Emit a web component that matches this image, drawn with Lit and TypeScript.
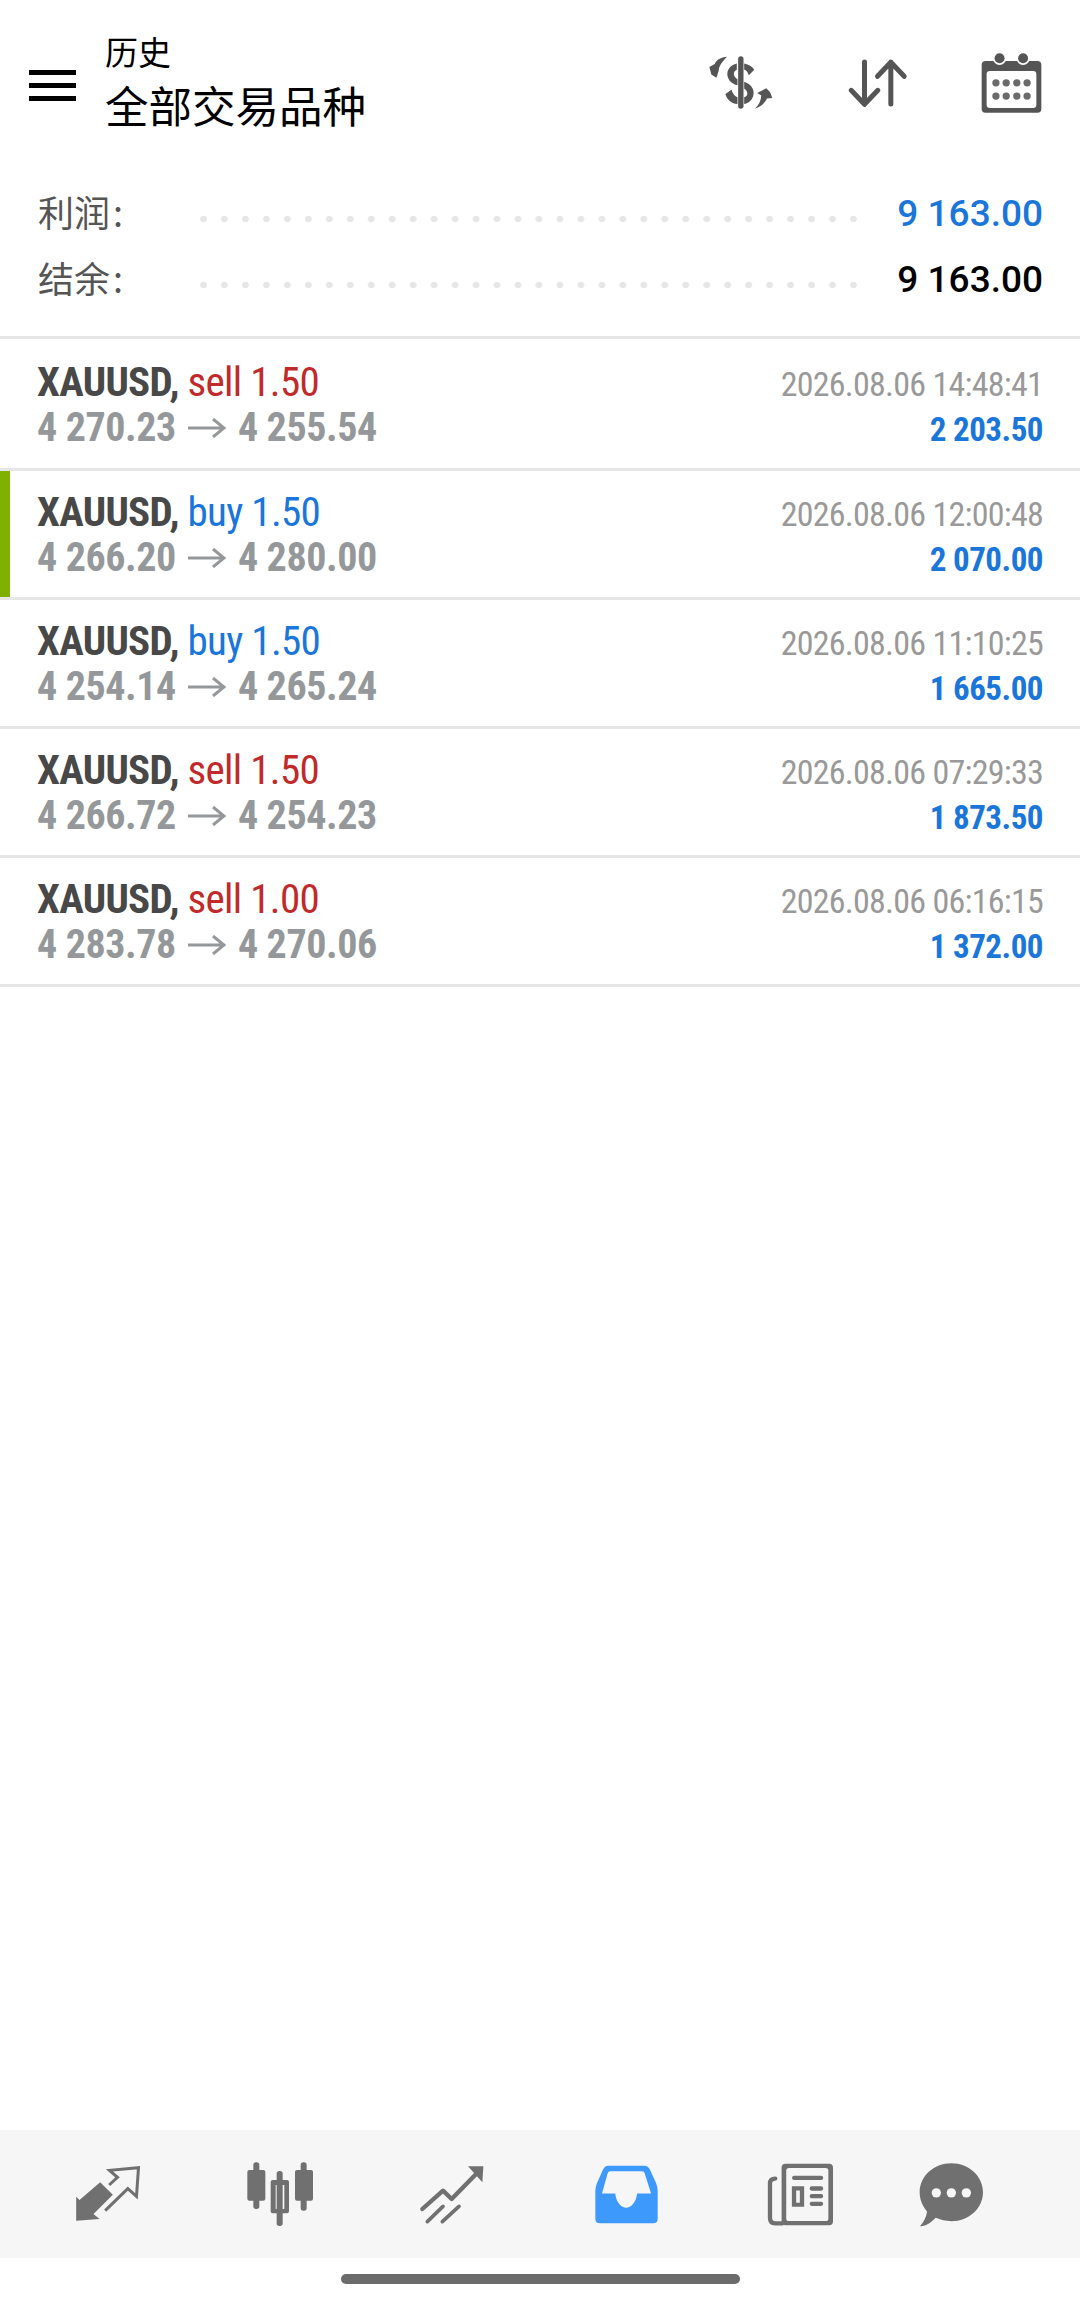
import { LitElement, html, css, svg } from "lit";
import { customElement } from "lit/decorators.js";

interface Deal {
  side: "sell" | "buy";
  lots: string;
  open: string;
  close: string;
  time: string;
  profit: string;
  marked?: boolean;
}

const DEALS: Deal[] = [
  { side: "sell", lots: "1.50", open: "4 270.23", close: "4 255.54", time: "2026.08.06 14:48:41", profit: "2 203.50" },
  { side: "buy", lots: "1.50", open: "4 266.20", close: "4 280.00", time: "2026.08.06 12:00:48", profit: "2 070.00", marked: true },
  { side: "buy", lots: "1.50", open: "4 254.14", close: "4 265.24", time: "2026.08.06 11:10:25", profit: "1 665.00" },
  { side: "sell", lots: "1.50", open: "4 266.72", close: "4 254.23", time: "2026.08.06 07:29:33", profit: "1 873.50" },
  { side: "sell", lots: "1.00", open: "4 283.78", close: "4 270.06", time: "2026.08.06 06:16:15", profit: "1 372.00" },
];

const dollarIcon = svg`
  <g fill="#555">
    <rect x="230" y="112" width="16" height="156" rx="8" />
    <path d="M226 133C202 138 192 160 201 178C206 190 218 196 228 198L228 180C216 174 212 158 226 152Z" />
    <path d="M248 133C262 136 272 142 278 152L262 168C258 158 254 153 248 151Z" />
    <path d="M248 188C266 194 278 208 276 224C274 242 260 252 248 254L248 234C256 232 259 226 257 220C255 214 252 211 248 209Z" />
    <path d="M192 224L210 212C214 224 220 232 228 234L228 254C208 252 196 240 192 224Z" />
    <path d="M197 113C178 115 165 122 160 135L144 144L150 166L165 176L172 155C172 142 182 128 197 113Z" />
    <path d="M280 268C300 262 312 248 316 238L332 236L325 218L314 207L287 221L299 229C298 245 292 258 280 268Z" />
  </g>`;

const sortIcon = svg`
  <g fill="none" stroke="#555" stroke-width="15" stroke-linecap="round" stroke-linejoin="round">
    <path d="M607 127V253M567 212L607 254L647 212" />
    <path d="M686 253V127M646 170L686 128L726 170" />
  </g>`;

const calendarIcon = svg`
  <rect x="960" y="120" width="180" height="156" rx="12" fill="#555" />
  <rect x="975" y="150" width="150" height="112" rx="10" fill="#fff" />
  <circle cx="1014" cy="112" r="20" fill="#fff" />
  <circle cx="1085" cy="112" r="20" fill="#fff" />
  <circle cx="1014" cy="112" r="15" fill="#555" />
  <circle cx="1085" cy="112" r="15" fill="#555" />
  <g fill="#6a6a6a">
    ${[1003, 1034, 1066, 1097].map(
      (x) => svg`<circle cx=${x} cy="186" r="11" /><circle cx=${x} cy="226" r="11" />`
    )}
  </g>`;

const quotesIcon = svg`
  <path fill="#707070" d="M108 300V228L118 238L180 185L218 222L160 280L178 295Z" />
  <path fill="none" stroke="#707070" stroke-width="9" d="M207 193L232 170L208 149L295 141L289 227L263 204L195 270" />`;

const chartIcon = svg`
  <g fill="#707070">
    <rect x="640" y="122" width="18" height="140" rx="8" />
    <rect x="622" y="145" width="54" height="92" rx="6" />
    <rect x="710" y="148" width="18" height="165" rx="8" />
    <path fill-rule="evenodd" d="M698 175H741Q747 175 747 181V269Q747 275 741 275H698Q692 275 692 269V181Q692 175 698 175ZM707 190V262H733V190Z" />
    <rect x="782" y="122" width="18" height="145" rx="8" />
    <rect x="765" y="145" width="54" height="92" rx="6" />
  </g>`;

const tradeIcon = svg`
  <g fill="none" stroke="#707070" stroke-linecap="round" stroke-linejoin="round">
    <path stroke-width="13" d="M1150 258L1212 203L1238 228L1312 152" />
    <path stroke-width="11" d="M1165 296L1212 250M1210 296L1260 250" />
  </g>
  <path fill="#707070" d="M1287 130H1333L1330 178Z" />`;

const historyIcon = svg`
  <path fill="#3d99fb" fill-rule="evenodd" d="M205 128H315Q326 128 332 140L350 180Q355 192 355 204V288Q355 302 341 302H181Q167 302 167 288V204Q167 192 172 180L190 140Q196 128 205 128ZM212 145Q206 145 204 152L187 212H227C230 240 246 255 260 255C274 255 290 240 293 212H335L316 152Q314 145 308 145Z" />`;

const newsIcon = svg`
  <path fill="#707070" fill-rule="evenodd" d="M739 122H870Q882 122 882 134V296Q882 308 870 308H739Q727 308 727 296V134Q727 122 739 122ZM749 135Q741 135 741 143V287Q741 295 749 295H860Q868 295 868 287V143Q868 135 860 135Z" />
  <path fill="none" stroke="#707070" stroke-width="13" stroke-linecap="round" d="M708 167Q692 167 692 182V285Q692 302 708 302H730" />
  <path fill="none" stroke="#707070" stroke-width="13" stroke-linecap="round" d="M765 165H846M818 197H846M818 220H846M818 243H846" />
  <path fill="#707070" fill-rule="evenodd" d="M758 190H795V252H758ZM771 203V240H782V203Z" />`;

const chatIcon = svg`
  <path fill="#707070" d="M1233 121C1286 121 1328 160 1328 208C1328 256 1286 295 1233 295C1216 295 1200 291 1186 285C1172 300 1156 311 1139 310C1150 298 1158 284 1160 266C1148 250 1138 232 1138 208C1138 160 1180 121 1233 121Z" />
  <g fill="#f6f6f6">
    <circle cx="1188" cy="210" r="14" />
    <circle cx="1233" cy="210" r="14" />
    <circle cx="1278" cy="210" r="14" />
  </g>`;

// tabs are not evenly spaced, the last one sits closer to its neighbour
const NAV = [
  { box: "96 130 212 180", w: 71, h: 60, art: quotesIcon, offset: 0 },
  { box: "612 115 216 204", w: 72, h: 68, art: chartIcon, offset: 101 },
  { box: "1140 120 204 186", w: 68, h: 62, art: tradeIcon, offset: 103 },
  { box: "160 120 202 190", w: 67, h: 63, art: historyIcon, offset: 106 },
  { box: "680 115 208 200", w: 69, h: 67, art: newsIcon, offset: 106 },
  { box: "1130 115 204 200", w: 68, h: 67, art: chatIcon, offset: 81.5 },
];

@customElement("app-root")
export class AppRoot extends LitElement {
  static styles = css`
    :host {
      display: flex;
      flex-direction: column;
      width: 1080px;
      height: 2300px;
      background: #fff;
      font-family: Roboto, "Noto Sans CJK SC", sans-serif;
      color: #000;
    }
    svg {
      display: block;
      flex: none;
    }
    .bar {
      display: flex;
      align-items: center;
      height: 112px;
      padding: 28px 0 0 29px;
      box-sizing: content-box;
    }
    .burger {
      display: flex;
      flex-direction: column;
      gap: 8px;
      width: 47px;
      margin-top: 3px;
    }
    .burger i {
      height: 5px;
      background: #000;
    }
    .heading {
      align-self: flex-start;
      flex: 1;
      margin-left: 29px;
      padding-top: 3px;
      font-family: "Noto Sans CJK SC", sans-serif;
    }
    .heading small {
      display: block;
      font-size: 33px;
      line-height: 40px;
    }
    .heading b {
      display: block;
      font-size: 43.5px;
      font-weight: 400;
      line-height: 67px;
    }
    .actions {
      display: flex;
      align-items: center;
      gap: 71.5px;
      padding-right: 37px;
      margin-bottom: 3px;
    }
    .summary {
      padding: 39px 37px 25px 38px;
      border-bottom: 3px solid #e6e6e6;
    }
    .total {
      display: flex;
      align-items: center;
      height: 66px;
    }
    .total label {
      width: 154.5px;
      margin-top: -2px;
      font-family: "Noto Sans CJK SC", sans-serif;
      font-size: 36px;
      color: #555;
    }
    .total label em {
      margin-left: 3px;
      font-style: normal;
    }
    .leader {
      width: 671px;
      height: 8px;
      margin-top: 14px;
      background: radial-gradient(circle, #e6e6e6 3px, transparent 3.6px) 0 0 / 20.97px 8px repeat-x;
    }
    .total span {
      margin-left: auto;
      padding-top: 2px;
      font-size: 37px;
      font-weight: 500;
    }
    .blue {
      color: #1a76d8;
    }
    .deal {
      position: relative;
      display: flex;
      justify-content: space-between;
      height: 126px;
      padding: 0 37px;
      border-bottom: 3px solid #e6e6e6;
      font-stretch: 75%;
    }
    .deal.first {
      height: 129px;
    }
    .deal.marked::before {
      content: "";
      position: absolute;
      left: 0;
      top: 0;
      bottom: 0;
      width: 10px;
      background: #7fb000;
    }
    .left,
    .right {
      display: flex;
      flex-direction: column;
      justify-content: center;
    }
    .left {
      padding-top: 2px;
    }
    .right {
      align-items: flex-end;
      padding-top: 6px;
    }
    .title {
      font-size: 41px;
      line-height: 46px;
      letter-spacing: -0.7px;
      color: #484848;
    }
    .title b {
      font-weight: 700;
    }
    .sell {
      color: #c02a2a;
    }
    .buy {
      color: #1a76d8;
    }
    .prices {
      display: flex;
      align-items: center;
      gap: 12px;
      font-size: 40px;
      line-height: 46px;
      font-weight: 700;
      letter-spacing: -0.4px;
      color: #95989a;
    }
    .time {
      font-size: 34px;
      line-height: 46px;
      letter-spacing: -0.75px;
      color: #999;
    }
    .profit {
      font-size: 33px;
      line-height: 46px;
      font-weight: 700;
      letter-spacing: -0.5px;
      color: #1a76d8;
    }
    .fill {
      flex: 1;
    }
    .nav {
      display: flex;
      align-items: center;
      height: 128px;
      padding-left: 72px;
      background: #f6f6f6;
    }
    .home {
      height: 42px;
      display: flex;
      justify-content: center;
      padding-top: 16px;
      box-sizing: border-box;
    }
    .home i {
      width: 399px;
      height: 10px;
      border-radius: 5px;
      background: #6b6b6b;
    }
  `;

  private icon(box: string, w: number, h: number, art: unknown) {
    return html`<svg viewBox=${box} width=${w} height=${h}>${art}</svg>`;
  }

  private renderDeal(d: Deal, i: number) {
    return html`
      <div class="deal ${i === 0 ? "first" : ""} ${d.marked ? "marked" : ""}">
        <div class="left">
          <div class="title"><b>XAUUSD,</b> <span class=${d.side}>${d.side} ${d.lots}</span></div>
          <div class="prices">
            <span>${d.open}</span>
            <svg viewBox="0 0 38 20" width="38" height="20">
              <path d="M0 10H36M25 1L36 10L25 19" fill="none" stroke="#95989a" stroke-width="3" />
            </svg>
            <span>${d.close}</span>
          </div>
        </div>
        <div class="right">
          <div class="time">${d.time}</div>
          <div class="profit">${d.profit}</div>
        </div>
      </div>
    `;
  }

  render() {
    return html`
      <header class="bar">
        <div class="burger"><i></i><i></i><i></i></div>
        <div class="heading">
          <small>历史</small>
          <b>全部交易品种</b>
        </div>
        <div class="actions">
          ${this.icon("140 105 200 170", 67, 57, dollarIcon)}
          ${this.icon("555 115 185 150", 62, 50, sortIcon)}
          ${this.icon("955 90 190 190", 63, 63, calendarIcon)}
        </div>
      </header>
      <section class="summary">
        <div class="total"><label>利润<em>:</em></label><i class="leader"></i><span class="blue">9 163.00</span></div>
        <div class="total"><label>结余<em>:</em></label><i class="leader"></i><span>9 163.00</span></div>
      </section>
      ${DEALS.map((d, i) => this.renderDeal(d, i))}
      <div class="fill"></div>
      <nav class="nav">
        ${NAV.map(
          (n) => html`<div style="margin-left:${n.offset}px">${this.icon(n.box, n.w, n.h, n.art)}</div>`
        )}
      </nav>
      <div class="home"><i></i></div>
    `;
  }
}
